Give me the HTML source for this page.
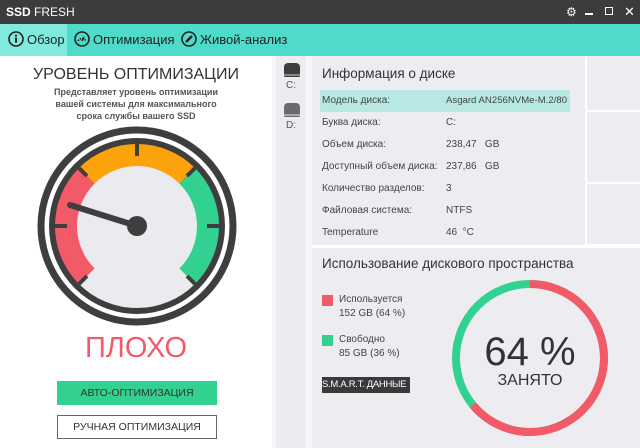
<!DOCTYPE html>
<html><head><meta charset="utf-8"><style>
*{margin:0;padding:0;box-sizing:border-box}
body{width:640px;height:448px;overflow:hidden;font-family:"Liberation Sans","DejaVu Sans",sans-serif;background:#fff;position:relative;color:#333}
.abs{position:absolute}
.tb{left:0;top:0;width:640px;height:24px;background:#3c3c3c;color:#fff;font-size:12px;line-height:24px;padding-left:6px}
.tabs{left:0;top:24px;width:640px;height:32px;background:#4fdbc9;font-size:13px;color:#222}
.tab{position:absolute;top:0;height:32px;line-height:32px;white-space:nowrap}
.tab svg{margin-right:3px}
.row{position:absolute;left:8px;width:250px;height:22px;line-height:22px;font-size:10px;color:#444;white-space:nowrap}
.row span{position:absolute;left:124px}
</style></head><body>
<div class="abs tb"><b>SSD</b> FRESH
<span style="position:absolute;left:566px;top:0;font-size:12px">⚙</span>
<span style="position:absolute;left:585px;top:13px;width:8px;height:2px;background:#fff"></span>
<span style="position:absolute;left:605px;top:7px;width:8px;height:8px;border:1.5px solid #fff"></span>
<span style="position:absolute;left:624px;top:0;font-size:13px">✕</span>
</div>
<div class="abs tabs">
<div class="tab" style="left:0;width:67px;background:#80eadc"></div>
<div class="tab" style="left:8px"><svg width="16" height="16" viewBox="0 0 16 16" style="vertical-align:-3px"><circle cx="8" cy="8" r="7" fill="none" stroke="#222" stroke-width="1.6"/><circle cx="8" cy="4.6" r="1.1" fill="#222"/><rect x="7" y="6.6" width="2" height="5" fill="#222"/></svg>Обзор</div>
<div class="tab" style="left:74px"><svg width="16" height="16" viewBox="0 0 16 16" style="vertical-align:-3px"><circle cx="8" cy="8" r="7" fill="none" stroke="#222" stroke-width="1.6"/><path d="M4 10 A4.5 4.5 0 0 1 12 10" fill="none" stroke="#222" stroke-width="1.5" stroke-dasharray="1.5 1"/><path d="M8 10 L10 6" stroke="#222" stroke-width="1.5"/></svg>Оптимизация</div>
<div class="tab" style="left:181px"><svg width="16" height="16" viewBox="0 0 16 16" style="vertical-align:-3px"><circle cx="8" cy="8" r="7" fill="none" stroke="#222" stroke-width="1.6"/><path d="M5 11 L11 5" stroke="#222" stroke-width="2.5"/></svg>Живой-анализ</div>
</div>

<div class="abs" style="left:0;top:66px;width:272px;text-align:center;font-size:16px;color:#333">УРОВЕНЬ ОПТИМИЗАЦИИ</div>
<div class="abs" style="left:0;top:86px;width:272px;text-align:center;font-size:9px;font-weight:bold;color:#555;line-height:12px">Представляет уровень оптимизации<br>вашей системы для максимального<br>срока службы вашего SSD</div>
<svg class="abs" style="left:0;top:120px" width="272" height="210" viewBox="0 120 272 210">
<circle cx="137" cy="226" r="96" fill="none" stroke="#3e3e3e" stroke-width="7"/>
<circle cx="137" cy="226" r="88" fill="#3e3e3e"/>
<path d="M137 226 L79 284 A82 82 0 0 1 79 168 Z" fill="#f25a68"/>
<path d="M137 226 L79 168 A82 82 0 0 1 195 168 Z" fill="#fca20b"/>
<path d="M137 226 L195 168 A82 82 0 0 1 195 284 Z" fill="#33d18f"/>
<circle cx="137" cy="226" r="60" fill="#ebebef"/>
<path d="M137 226 L79 284 A82 82 0 0 0 195 284 Z" fill="#ebebef"/>
<g stroke="#3e3e3e" stroke-width="4">
<line x1="137" y1="144" x2="137" y2="156"/>
<line x1="55" y1="226" x2="67" y2="226"/>
<line x1="219" y1="226" x2="207" y2="226"/>
<line x1="79" y1="168" x2="87" y2="176"/>
<line x1="195" y1="168" x2="187" y2="176"/>
<line x1="79" y1="284" x2="87" y2="276"/>
<line x1="195" y1="284" x2="187" y2="276"/>
</g>
<line x1="70" y1="205" x2="137" y2="226" stroke="#3e3e3e" stroke-width="6" stroke-linecap="round"/>
<circle cx="137" cy="226" r="10" fill="#3e3e3e"/>
</svg>
<div class="abs" style="left:0;top:332px;width:272px;text-align:center;font-size:29px;color:#f55a6a">ПЛОХО</div>
<div class="abs" style="left:57px;top:381px;width:160px;height:24px;background:#33d18f;font-size:10.5px;text-align:center;line-height:24px;color:#333">АВТО-ОПТИМИЗАЦИЯ</div>
<div class="abs" style="left:57px;top:415px;width:160px;height:24px;border:1px solid #666;font-size:10.5px;text-align:center;line-height:22px;color:#333">РУЧНАЯ ОПТИМИЗАЦИЯ</div>

<div class="abs" style="left:272px;top:56px;width:40px;height:392px;background:#f6f6f8"></div>
<div class="abs" style="left:276px;top:56px;width:30px;height:392px;background:#ececf0"></div>
<div class="abs" style="left:284px;top:63px;width:16px;height:14px;background:#3e3e3e;border-radius:4px 4px 1px 1px"></div>
<div class="abs" style="left:284px;top:74px;width:16px;height:2px;background:#888"></div>
<div class="abs" style="left:276px;top:80px;width:30px;text-align:center;font-size:10px;color:#555">C:</div>
<div class="abs" style="left:284px;top:103px;width:16px;height:14px;background:#6a6a6a;border-radius:4px 4px 1px 1px"></div>
<div class="abs" style="left:284px;top:114px;width:16px;height:2px;background:#aaa"></div>
<div class="abs" style="left:276px;top:120px;width:30px;text-align:center;font-size:10px;color:#555">D:</div>

<div class="abs" style="left:312px;top:56px;width:273px;height:189px;background:#ededf1">
<div style="position:absolute;left:10px;top:10px;font-size:13.5px;color:#333">Информация о диске</div>
<div style="position:absolute;left:8px;top:34px;width:250px;height:22px;background:#b7e8e3"></div>
<div class="row" style="top:34px;left:10px">Модель диска:<span style="font-size:9.6px">Asgard AN256NVMe-M.2/80</span></div>
<div class="row" style="top:56px;left:10px">Буква диска:<span>C:</span></div>
<div class="row" style="top:78px;left:10px">Объем диска:<span>238,47 &nbsp; GB</span></div>
<div class="row" style="top:100px;left:10px">Доступный объем диска:<span>237,86 &nbsp; GB</span></div>
<div class="row" style="top:122px;left:10px">Количество разделов:<span>3</span></div>
<div class="row" style="top:144px;left:10px">Файловая система:<span>NTFS</span></div>
<div class="row" style="top:166px;left:10px">Temperature<span>46 &nbsp;°C</span></div>
</div>
<div class="abs" style="left:587px;top:56px;width:53px;height:54px;background:#ededf1"></div>
<div class="abs" style="left:587px;top:112px;width:53px;height:70px;background:#ededf1"></div>
<div class="abs" style="left:587px;top:184px;width:53px;height:60px;background:#ededf1"></div>

<div class="abs" style="left:312px;top:248px;width:328px;height:200px;background:#ededf1">
<div style="position:absolute;left:10px;top:8px;font-size:13.5px;color:#333">Использование дискового пространства</div>
<div style="position:absolute;left:10px;top:47px;width:11px;height:11px;background:#f25a68"></div>
<div style="position:absolute;left:27px;top:45px;font-size:10px;line-height:14px;color:#444">Используется<br>152 GB (64 %)</div>
<div style="position:absolute;left:10px;top:87px;width:11px;height:11px;background:#33d18f"></div>
<div style="position:absolute;left:27px;top:85px;font-size:10px;line-height:14px;color:#444">Свободно<br>85 GB (36 %)</div>
<div style="position:absolute;left:10px;top:129px;width:88px;height:16px;background:#3a3a3a;color:#fff;font-size:9.5px;line-height:16px;white-space:nowrap;overflow:hidden;letter-spacing:-0.3px">S.M.A.R.T. ДАННЫЕ</div>
<svg style="position:absolute;left:138px;top:30px" width="160" height="160" viewBox="0 0 160 160">
<circle cx="80" cy="80" r="74" fill="none" stroke="#33d18f" stroke-width="8"/>
<circle cx="80" cy="80" r="74" fill="none" stroke="#f25a68" stroke-width="8" stroke-dasharray="297.6 500" transform="rotate(-90 80 80)"/>
</svg>
<div style="position:absolute;left:158px;top:82px;width:120px;text-align:center;font-size:40px;color:#333">64 %</div>
<div style="position:absolute;left:158px;top:124px;width:120px;text-align:center;font-size:16px;color:#333">ЗАНЯТО</div>
</div>
</body></html>
